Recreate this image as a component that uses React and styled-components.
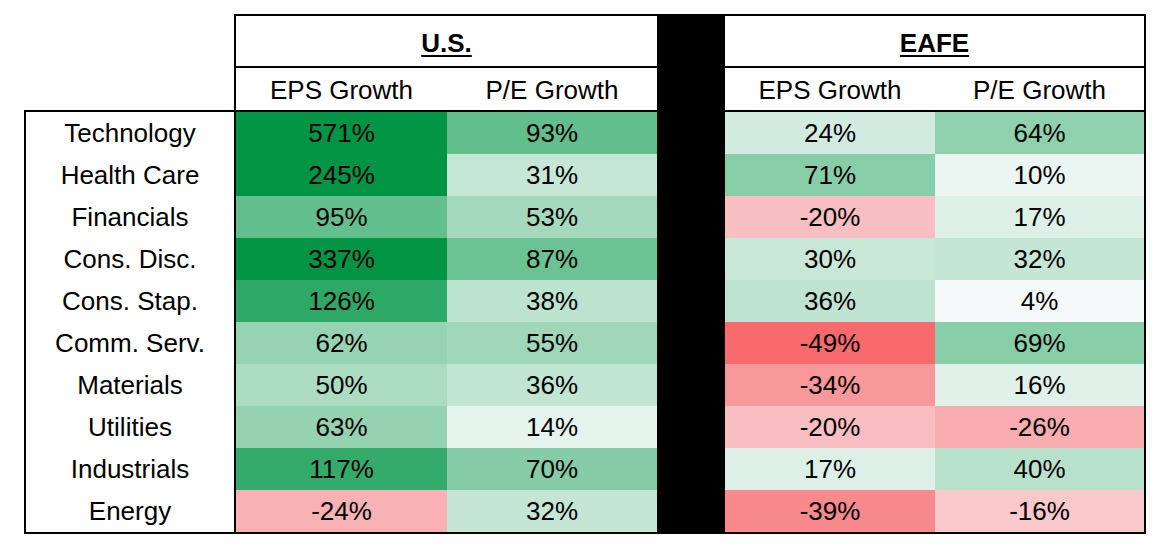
import React from 'react';
import styled, { createGlobalStyle } from 'styled-components';

const Global = createGlobalStyle`
  html, body { margin: 0; padding: 0; background: #ffffff; }
  body { font-family: "Liberation Sans", Arial, sans-serif; color: #000; }
`;

const Page = styled.div`
  padding: 14px 0 0 24px;
  display: flex;
  flex-direction: column;
  align-items: flex-start;
`;

const HeaderBox = styled.div`
  margin-left: 210px;
  display: grid;
  grid-template-columns: 211px 210px 68px 210px 209px;
  grid-template-rows: 52px 42px;
  border: 2px solid #000;
  border-bottom: none;
`;

const Title = styled.div`
  grid-column: span 2;
  box-sizing: border-box;
  border-bottom: 2px solid #000;
  display: flex;
  align-items: center;
  justify-content: center;
  padding-top: 4px;
  font-size: 26px;
  font-weight: 700;
  text-decoration: underline;
  text-decoration-thickness: 2px;
  text-underline-offset: 3px;
`;

const Divider = styled.div`
  background: #000;
  grid-column: ${p => p.$col};
  grid-row: 1 / span ${p => p.$rows};
`;

const SubHead = styled.div`
  display: flex;
  align-items: center;
  justify-content: center;
  padding-top: 3px;
  font-size: 26px;
`;

const DataGrid = styled.div`
  display: grid;
  grid-template-columns: 210px 211px 210px 68px 210px 209px;
  grid-auto-rows: 42px;
  border: 2px solid #000;
`;

const Label = styled.div`
  box-sizing: border-box;
  border-right: 2px solid #000;
  display: flex;
  align-items: center;
  justify-content: center;
  font-size: 26px;
`;

const Cell = styled.div`
  background: ${p => p.$bg};
  display: flex;
  align-items: center;
  justify-content: center;
  font-size: 26px;
`;

const rows = [
  ['Technology', ['571%', '#009444'], ['93%', '#62BE8C'], ['24%', '#D2EBE0'], ['64%', '#8FD1AD']],
  ['Health Care', ['245%', '#009444'], ['31%', '#C7E7D6'], ['71%', '#87CDA7'], ['10%', '#EBF5F1']],
  ['Financials', ['95%', '#63BF8E'], ['53%', '#A5D9BD'], ['-20%', '#F9BEC1'], ['17%', '#DDF0E7']],
  ['Cons. Disc.', ['337%', '#009444'], ['87%', '#6BC293'], ['30%', '#C8E7D7'], ['32%', '#C5E6D5']],
  ['Cons. Stap.', ['126%', '#2DA866'], ['38%', '#BCE3CE'], ['36%', '#BEE3D0'], ['4%', '#F5F9FA']],
  ['Comm. Serv.', ['62%', '#96D3B2'], ['55%', '#A0D7B9'], ['-49%', '#F86A6E'], ['69%', '#88CEA8']],
  ['Materials', ['50%', '#ABDCC2'], ['36%', '#C0E5D1'], ['-34%', '#F8989B'], ['16%', '#DFF1E8']],
  ['Utilities', ['63%', '#94D2B0'], ['14%', '#E4F3EC'], ['-20%', '#F9BEC1'], ['-26%', '#F8ADB0']],
  ['Industrials', ['117%', '#35AB6B'], ['70%', '#86CCA6'], ['17%', '#DDF0E7'], ['40%', '#B7E1CB']],
  ['Energy', ['-24%', '#F8B2B5'], ['32%', '#C5E6D5'], ['-39%', '#F8898C'], ['-16%', '#F9C8CB']],
];

export default function App() {
  return (
    <>
      <Global />
      <Page>
        <HeaderBox>
          <Title>U.S.</Title>
          <Divider $col={3} $rows={2} />
          <Title>EAFE</Title>
          <SubHead>EPS Growth</SubHead>
          <SubHead>P/E Growth</SubHead>
          <SubHead>EPS Growth</SubHead>
          <SubHead>P/E Growth</SubHead>
        </HeaderBox>
        <DataGrid>
          <Divider $col={4} $rows={rows.length} />
          {rows.map(([label, a, b, c, d]) => (
            <React.Fragment key={label}>
              <Label>{label}</Label>
              <Cell $bg={a[1]}>{a[0]}</Cell>
              <Cell $bg={b[1]}>{b[0]}</Cell>
              <Cell $bg={c[1]}>{c[0]}</Cell>
              <Cell $bg={d[1]}>{d[0]}</Cell>
            </React.Fragment>
          ))}
        </DataGrid>
      </Page>
    </>
  );
}
